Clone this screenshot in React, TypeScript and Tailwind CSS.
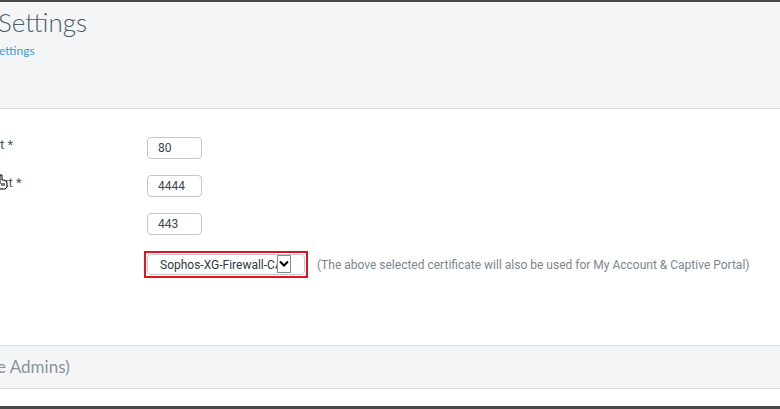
import React from "react";

const Field = ({ value }: { value: string }) => (
  <div className="w-[55px] h-[22px] border border-[#c4c8cc] rounded-[4px] bg-white flex items-center pl-[10px] text-[12px] text-[#3c4650]" style={{ fontFamily: "Roboto, 'Liberation Sans', sans-serif" }}>
    {value}
  </div>
);

export default function App() {
  return (
    <div className="w-[780px] h-[409px] overflow-hidden bg-white flex flex-col" style={{ fontFamily: "Roboto, 'Liberation Sans', sans-serif" }}>
      <div className="h-[2px] bg-[#474747]" />
      <div className="h-[107px] bg-[#f4f5f7] border-b border-[#dcdcdc] flex flex-col">
        <div className="mt-[3px] -ml-[2px] text-[26px] leading-[34px] font-light text-[#4f5b66]" style={{ fontFamily: "Lato, 'Open Sans', sans-serif" }}>
          Settings
        </div>
        <div className="mt-[4px] -ml-[1px] text-[12px] leading-[16px] text-[#3d9bd8]" style={{ fontFamily: "Lato, 'Open Sans', sans-serif" }}>
          ettings
        </div>
      </div>
      <div className="h-[236px] flex flex-col gap-[16px] pt-[28px]">
        <div className="flex items-center h-[22px]">
          <div className="w-[147px] text-[13px] text-[#4a5560] -mt-[6px]">t *</div>
          <Field value="80" />
        </div>
        <div className="flex items-center h-[22px]">
          <div className="w-[147px] text-[13px] text-[#4a5560] -mt-[6px] relative">
            <span className="pl-[2px]">xt *</span>
            <svg className="absolute left-[-3px] top-[1px]" width="12" height="16" viewBox="0 0 12 16">
              <path d="M3 1 L5 1 L5 6 L7 6 L9 7 L10 9 L10 13 L8 15 L3 15 L1 12 L0 9 L2 9 L3 10 Z" fill="white" stroke="black" strokeWidth="1" />
              <path d="M5 9 V12 M7 9 V12" stroke="black" strokeWidth="1" />
            </svg>
          </div>
          <Field value="4444" />
        </div>
        <div className="flex items-center h-[22px]">
          <div className="w-[147px]" />
          <Field value="443" />
        </div>
        <div className="flex items-center h-[27px]">
          <div className="w-[144px]" />
          <div className="w-[164px] h-[27px] border-2 border-[#e3131b] p-[1px]">
            <div className="relative h-[21px] border border-[#c4c8cc] rounded-[4px] bg-white flex items-center">
              <div className="w-[129px] overflow-hidden whitespace-nowrap pl-[12px] text-[12px] text-[#2f3a44]">
                Sophos-XG-Firewall-CA
              </div>
              <div className="w-[14px] h-[18px] -mt-[2px] border border-[#8a8a8a] bg-white flex items-center justify-center">
                <svg width="10" height="7" viewBox="0 0 10 7">
                  <path d="M1 1.5 L5 5.5 L9 1.5" fill="none" stroke="black" strokeWidth="2" />
                </svg>
              </div>
            </div>
          </div>
          <div className="ml-[9px] text-[12px] text-[#7d868e] whitespace-nowrap">
            (The above selected certificate will also be used for My Account &amp; Captive Portal)
          </div>
        </div>
      </div>
      <div className="h-[44px] bg-[#f4f5f7] border-y border-[#dcdcdc] flex items-center">
        <div className="-ml-[3px] text-[17px] text-[#8a939b]" style={{ fontFamily: "Lato, 'Open Sans', sans-serif" }}>
          e Admins)
        </div>
      </div>
      <div className="h-[17px] bg-white" />
      <div className="h-[3px] bg-[#474747]" />
    </div>
  );
}
